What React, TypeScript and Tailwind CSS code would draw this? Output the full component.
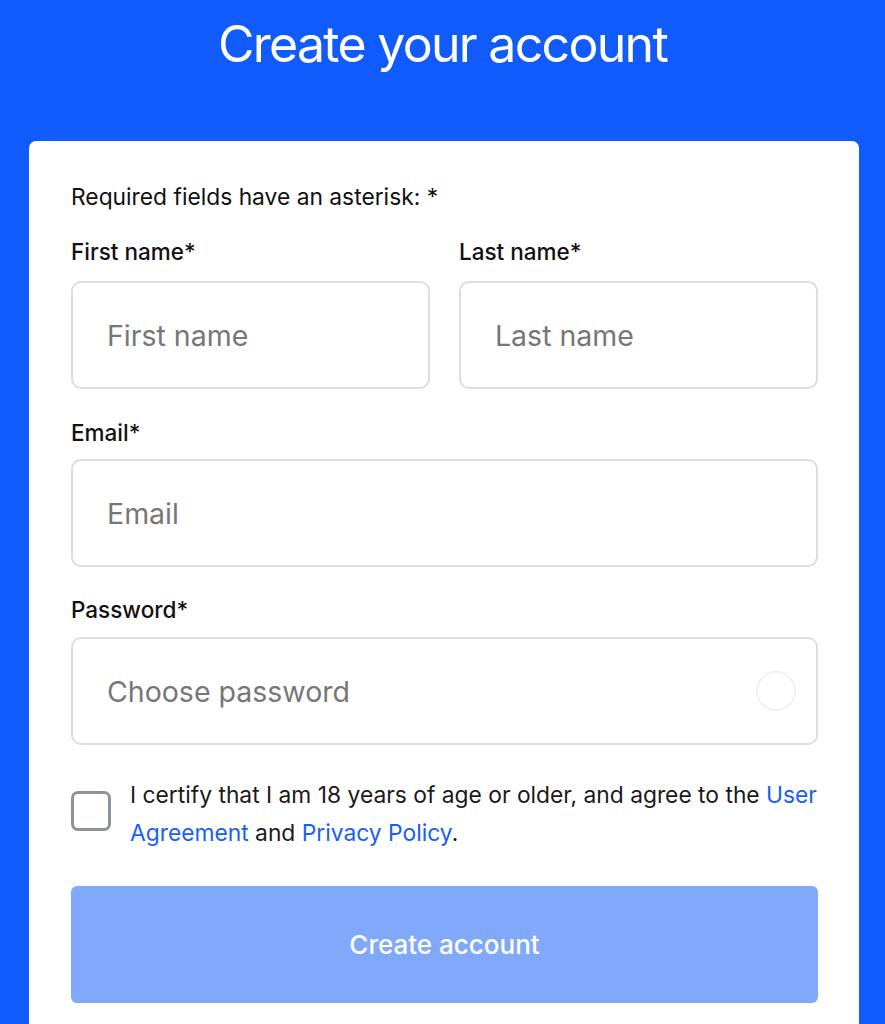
import React from "react";

export default function App() {
  const inputCls =
    "block w-full h-[108px] rounded-[10px] border-2 border-[#dedede] bg-white pl-[34px] pr-4 text-[28.5px] text-[#222] placeholder:text-[#777] outline-none";
  const labelCls = "block text-[22.5px] leading-[28px] font-medium text-[#111]";
  return (
    <div className="min-h-screen bg-[#125bfb] font-['Inter',sans-serif] pt-[14px]">
      <h1 className="text-center text-white text-[50px] leading-[60px] font-normal tracking-[-1.7px]">
        Create your account
      </h1>
      <div className="ml-[29px] mr-[26px] mt-[67px] rounded-t-[7px] bg-white pl-[42px] pr-[41px] pt-[42px] pb-10">
        <p className="text-[22.8px] leading-[28px] text-[#111]">Required fields have an asterisk: *</p>
        <div className="mt-[27px] grid grid-cols-2 gap-x-[29px]">
          <div>
            <label className={labelCls}>First name*</label>
            <input className={inputCls + " mt-[15px]"} placeholder="First name" />
          </div>
          <div>
            <label className={labelCls}>Last name*</label>
            <input className={inputCls + " mt-[15px]"} placeholder="Last name" />
          </div>
        </div>
        <div className="mt-[30px]">
          <label className={labelCls}>Email*</label>
          <input className={inputCls + " mt-[12px]"} placeholder="Email" />
        </div>
        <div className="mt-[29px]">
          <label className={labelCls}>Password*</label>
          <div className="relative mt-[13px]">
            <input className={inputCls} placeholder="Choose password" type="password" />
            <span className="absolute right-[22px] top-1/2 -translate-y-1/2 h-[40px] w-[40px] rounded-full border-2 border-[#f2f2f2]" />
          </div>
        </div>
        <div className="mt-[29px] flex items-start gap-[19px]">
          <span className="mt-[17px] h-[40px] w-[40px] shrink-0 rounded-[7px] border-[3px] border-[#8e9299] bg-white" />
          <p className="pt-[2px] text-[22.8px] leading-[38px] text-[#1a1a1a]">
            I certify that I am 18 years of age or older, and agree to the{" "}
            <span className="text-[#1760f6]">User Agreement</span> and{" "}
            <span className="text-[#1760f6]">Privacy Policy</span>.
          </p>
        </div>
        <button className="mt-[34px] flex h-[117px] w-full items-center justify-center rounded-[6px] bg-[#80a9fb] text-[26px] font-medium text-white">
          Create account
        </button>
      </div>
    </div>
  );
}
